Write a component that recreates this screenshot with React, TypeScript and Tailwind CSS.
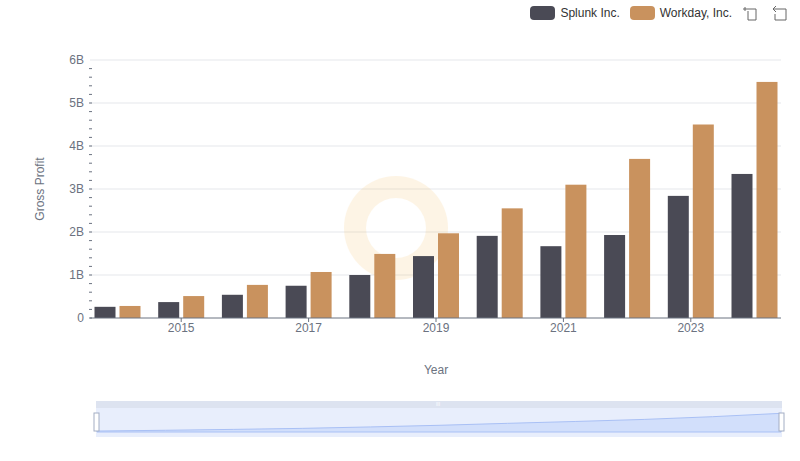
const splunk = [0.26, 0.37, 0.54, 0.75, 1.0, 1.44, 1.91, 1.67, 1.93, 2.84, 3.35];
const workday = [0.28, 0.51, 0.77, 1.07, 1.49, 1.97, 2.55, 3.1, 3.7, 4.5, 5.49];

const Y0 = 318;
const PX = 43;

const Chart = () => {
  const center = (i: number) => 117.5 + 63.7 * i;
  const minor: number[] = [];
  for (let v = 0; v <= 6; v += 0.2) minor.push(v);
  const area =
    "M97,432 " +
    workday.map((v, i) => `L${97 + (684 * i) / 10},${432 - v * 3.4}`).join(" ") +
    " L781,432 Z";
  return (
    <svg width="800" height="461" className="absolute left-0 top-0" style={{ fontFamily: "'Liberation Sans', Arial, sans-serif" }}>
      {[1, 2, 3, 4, 5, 6].map((v) => (
        <line key={v} x1={90} x2={781} y1={Y0 - v * PX} y2={Y0 - v * PX} stroke="#e5e7eb" />
      ))}
      {minor.map((v, i) => (
        <line key={i} x1={89} x2={92} y1={Y0 - v * PX} y2={Y0 - v * PX} stroke="#6b7280" />
      ))}
      {[0, 1, 2, 3, 4, 5, 6].map((v) => (
        <text key={v} x={84} y={Y0 - v * PX + 4} fontSize={12} fill="#6b7280" textAnchor="end">
          {v === 0 ? "0" : `${v}B`}
        </text>
      ))}
      {/* watermark */}
      <g opacity={0.1}>
        <circle cx={396} cy={228} r={52} fill="#f59e0b" />
        <circle cx={396} cy={228} r={30} fill="#fff" />
      </g>
      {splunk.map((v, i) => (
        <rect key={"s" + i} x={center(i) - 23} y={Y0 - v * PX} width={21} height={v * PX} fill="#4a4a55" />
      ))}
      {workday.map((v, i) => (
        <rect key={"w" + i} x={center(i) + 2} y={Y0 - v * PX} width={21} height={v * PX} fill="#c9925e" />
      ))}
      <line x1={90} x2={781} y1={Y0} y2={Y0} stroke="#6b7280" />
      {[1, 3, 5, 7, 9].map((i) => (
        <g key={i}>
          <line x1={center(i)} x2={center(i)} y1={Y0} y2={Y0 + 4} stroke="#6b7280" />
          <text x={center(i)} y={332} fontSize={12} fill="#6b7280" textAnchor="middle">
            {2014 + i}
          </text>
        </g>
      ))}
      <text x={436} y={374} fontSize={12} fill="#6b7280" textAnchor="middle">Year</text>
      <text x={44} y={189} fontSize={12} fill="#6b7280" textAnchor="middle" transform="rotate(-90 44 189)">Gross Profit</text>
      {/* data zoom */}
      <rect x={96} y={401} width={686} height={7} fill="#dde3f0" />
      <rect x={96} y={408} width={686} height={29} fill="#e8eefc" />
      <path d={area} fill="#d2dffb" stroke="#a9c0f5" strokeWidth={1} />
      <rect x={94} y={413} width={5} height={18} fill="#fff" stroke="#a3aec4" />
      <rect x={779} y={413} width={5} height={18} fill="#fff" stroke="#a3aec4" />
      <text x={438} y={406} fontSize={5} fill="#fff" textAnchor="middle">III</text>
    </svg>
  );
};

export default function App() {
  return (
    <div className="relative w-[800px] h-[461px] bg-white overflow-hidden" style={{ fontFamily: "'Liberation Sans', Arial, sans-serif" }}>
      <Chart />
      <div className="relative flex items-center justify-end gap-[10px] pt-[4px] pr-[12px] text-[12px] text-[#333]">
        <div className="flex items-center gap-[5px]">
          <span className="w-[25px] h-[14px] rounded-[4px] bg-[#4a4a55]" />
          <span>Splunk Inc.</span>
        </div>
        <div className="flex items-center gap-[5px]">
          <span className="w-[25px] h-[14px] rounded-[4px] bg-[#c9925e]" />
          <span>Workday, Inc.</span>
        </div>
        <svg width="16" height="16" viewBox="0 0 16 16" fill="none" stroke="#666" strokeWidth="1">
          <path d="M1 4h4M3 2v4M5 4h9v11M6 15h8M6 6v9" />
        </svg>
        <svg width="16" height="16" viewBox="0 0 16 16" fill="none" stroke="#666" strokeWidth="1" className="ml-[4px]">
          <path d="M4 1L1 4l3 3M1 4h13v11H3v-6" />
        </svg>
      </div>
    </div>
  );
}
